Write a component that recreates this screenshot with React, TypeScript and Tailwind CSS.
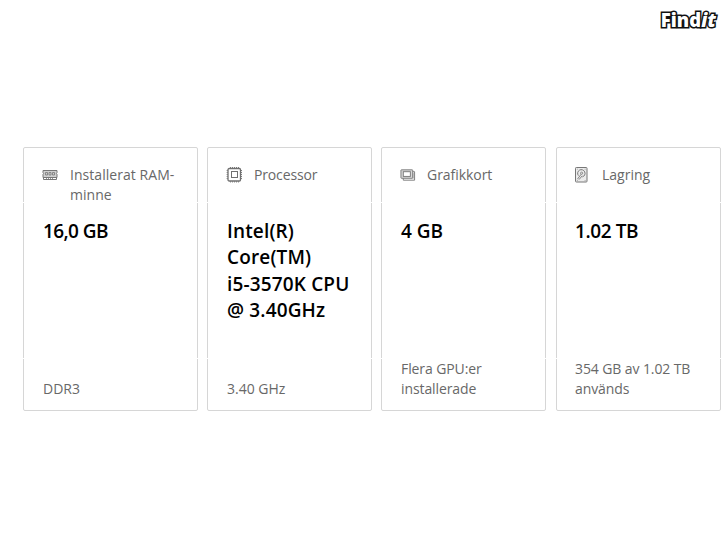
import type { ReactNode } from 'react';
import { twMerge } from 'tailwind-merge';

interface SpecCardProps {
  icon: ReactNode;
  label: string;
  value: string[];
  detail: string[];
  className?: string;
  headerClass?: string;
  valueClass?: string;
  detailClass?: string;
}

function RamIcon() {
  return (
    <svg width="16" height="12" viewBox="0 0 16 12" fill="none" stroke="#777">
      <path d="M1 1.5h14v2.2l-.6.8.6.8V8.5H1V5.3l.6-.8-.6-.8z" fill="#cfcfcf" />
      <path d="M3.5 3.5h2v2.5h-2zM7 3.5h2v2.5H7zM10.5 3.5h2v2.5h-2z" strokeWidth="0.8" />
      <path d="M1.5 8.5v2h13v-2" />
      <path d="M4 9.5h8" strokeDasharray="1 1" strokeWidth="0.8" />
    </svg>
  );
}

function CpuIcon() {
  return (
    <svg width="16" height="16" viewBox="0 0 16 16" fill="none" stroke="#707070">
      <rect x="2" y="1.5" width="12.5" height="12.5" rx="1.2" strokeWidth="1.3" />
      <rect x="5.5" y="4.5" width="6" height="6" />
      <path d="M4 .6h10M4 14.9h10M1.2 3v10M15.4 3v10" strokeDasharray="1 1" />
    </svg>
  );
}

function GpuIcon() {
  return (
    <svg width="17" height="14" viewBox="0 0 17 14" fill="none" stroke="#777">
      <rect x="1" y="1.5" width="12.5" height="9" rx="0.5" fill="#d8d8d8" />
      <rect x="3.5" y="3.5" width="7.5" height="5" fill="#fff" />
      <path d="M13.5 3.5h2v9H3.5v-2" />
      <path d="M14 5v6" strokeWidth="0.6" />
    </svg>
  );
}

function DiskIcon() {
  return (
    <svg width="14" height="16" viewBox="0 0 14 16" fill="none" stroke="#777">
      <rect x="1.5" y="0.5" width="11.5" height="14.5" rx="0.8" fill="#ececec" />
      <path d="M4.4 8.6A3.7 3.7 0 1 1 8.4 9.9" />
      <circle cx="7.6" cy="6.2" r="1.1" strokeWidth="0.8" />
      <path d="M7.2 7.2 3.4 12.2M5 12.6l3.2-3.8" strokeWidth="0.9" />
      <path d="M2.9 2.2h.8M10.7 2.2h.8M2.9 13.5h.8M10.7 13.5h.8" strokeWidth="0.7" />
    </svg>
  );
}

function Lines({ items }: { items: string[] }) {
  return items.map((item) => (
    <span key={item} className="block whitespace-nowrap">
      {item}
    </span>
  ));
}

function SpecCard({ icon, label, value, detail, className, headerClass, valueClass, detailClass }: SpecCardProps) {
  return (
    <section className={twMerge('relative flex h-[264px] shrink-0 flex-col rounded-xs border border-[#d6d6d6] pt-[17px] pb-[11px] pl-[19px]', className)}>
      {/* faint breaks in the side borders */}
      <div className="absolute -inset-x-0.5 top-[54px] h-px bg-white" />
      <div className="absolute -inset-x-0.5 top-[210px] h-px bg-white" />

      <header className={twMerge('flex h-[53px] leading-5 text-[#686868]', headerClass)}>
        <span className="-ml-px flex h-5 w-4 shrink-0 items-center">{icon}</span>
        <h2 className="w-[112px]">{label}</h2>
      </header>
      <p className={twMerge('text-[19px] leading-[26.3px] font-semibold text-black', valueClass)}>
        <Lines items={value} />
      </p>
      <p className={twMerge('mt-auto leading-5 text-[#686868]', detailClass)}>
        <Lines items={detail} />
      </p>
    </section>
  );
}

export default function App() {
  return (
    <div className="flex h-[546px] w-[728px] flex-col overflow-hidden bg-white font-['Open_Sans',sans-serif] text-sm">
      <div className="flex h-[147px] justify-end pt-2 pr-3">
        <div className="h-6 text-[18.5px] leading-6 font-extrabold tracking-[0.1px] text-white [-webkit-text-stroke:3px_#111] [paint-order:stroke_fill]">
          Find<span className="italic">it</span>
        </div>
      </div>

      <main className="flex pl-[23px]">
        <SpecCard
          icon={<RamIcon />}
          label="Installerat RAM-minne"
          value={['16,0 GB']}
          detail={['DDR3']}
          className="w-[175px]"
          headerClass="gap-3 tracking-[0.05px]"
          valueClass="tracking-[-0.6px]"
        />
        <SpecCard
          icon={<CpuIcon />}
          label="Processor"
          value={['Intel(R)', 'Core(TM)', 'i5-3570K CPU', '@ 3.40GHz']}
          detail={['3.40 GHz']}
          className="ml-[9px] w-[165px]"
          headerClass="gap-3 tracking-[-0.15px]"
          valueClass="tracking-[0.15px]"
        />
        <SpecCard
          icon={<GpuIcon />}
          label="Grafikkort"
          value={['4 GB']}
          detail={['Flera GPU:er', 'installerade']}
          className="ml-[9px] w-[165px]"
          headerClass="gap-[11px] tracking-[-0.05px]"
          detailClass="tracking-[-0.1px]"
        />
        <SpecCard
          icon={<DiskIcon />}
          label="Lagring"
          value={['1.02 TB']}
          detail={['354 GB av 1.02 TB', 'används']}
          className="ml-[10px] w-[165px] pl-[18px]"
          headerClass="gap-3"
          valueClass="tracking-[-0.4px]"
          detailClass="tracking-[-0.1px]"
        />
      </main>
    </div>
  );
}
